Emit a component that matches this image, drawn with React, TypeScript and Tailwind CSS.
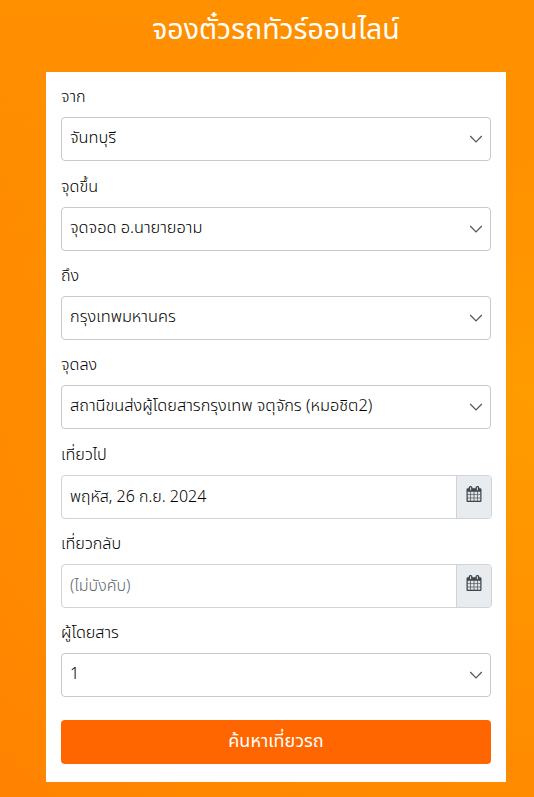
import { FC, ReactNode } from "react";
import clsx from "clsx";

type FieldProps = {
  label: string;
  value: string;
};

const Chevron: FC = () => (
  <svg
    viewBox="0 0 14 8"
    className="h-2 w-3.5 fill-none stroke-[#555]"
    strokeWidth="1.2"
  >
    <path d="M1.2 1L7 7l5.8-6" />
  </svg>
);

const CalendarIcon: FC = () => (
  <svg
    viewBox="0 0 1792 1792"
    className="size-4 fill-[#40474e] stroke-[#40474e]"
    strokeWidth="16"
  >
    <path d="M192 1664h288v-288h-288v288zm352 0h320v-288h-320v288zm-352-352h288v-320h-288v320zm352 0h320v-320h-320v320zm-352-384h288v-288h-288v288zm736 736h320v-288h-320v288zm-384-736h320v-288h-320v288zm768 736h288v-288h-288v288zm-384-352h320v-320h-320v320zm-352-864v-288q0-13-9.5-22.5t-22.5-9.5h-64q-13 0-22.5 9.5t-9.5 22.5v288q0 13 9.5 22.5t22.5 9.5h64q13 0 22.5-9.5t9.5-22.5zm736 864h288v-320h-288v320zm-384-384h320v-288h-320v288zm384 0h288v-288h-288v288zm32-480v-288q0-13-9.5-22.5t-22.5-9.5h-64q-13 0-22.5 9.5t-9.5 22.5v288q0 13 9.5 22.5t22.5 9.5h64q13 0 22.5-9.5t9.5-22.5zm384-64v1280q0 52-38 90t-90 38h-1408q-52 0-90-38t-38-90v-1280q0-52 38-90t90-38h128v-96q0-66 47-113t113-47h64q66 0 113 47t47 113v96h384v-96q0-66 47-113t113-47h64q66 0 113 47t47 113v96h128q52 0 90 38t38 90z" />
  </svg>
);

const Field: FC<{ label: string; children: ReactNode }> = ({
  label,
  children,
}) => (
  <div className="flex h-[89.35px] flex-col">
    <label className="h-8 text-[16.2px] leading-[24.6px] whitespace-nowrap">
      {label}
    </label>
    {children}
  </div>
);

const SelectField: FC<FieldProps> = ({ label, value }) => (
  <Field label={label}>
    <div className="flex h-11 items-center justify-between rounded border border-[#c8c9cb] pr-[7px] pl-2">
      <span className="-mt-0.5 text-[16.35px] leading-6">{value}</span>
      <Chevron />
    </div>
  </Field>
);

const DateField: FC<FieldProps & { muted?: boolean }> = ({
  label,
  value,
  muted,
}) => (
  <Field label={label}>
    <div className="-mr-px flex h-11 rounded border border-[#ced4da]">
      <div
        className={clsx(
          "flex grow items-center pl-2",
          muted && "text-[#5f6870]",
        )}
      >
        {value}
      </div>
      <div className="flex w-[35px] items-center justify-center rounded-r-[3px] border-l border-[#ced4da] bg-[#e9ecef] pb-1.5">
        <CalendarIcon />
      </div>
    </div>
  </Field>
);

const App: FC = () => (
  <div className="h-[797px] bg-[linear-gradient(to_bottom,#ff9000,#ff900000_50%),radial-gradient(farthest-corner_at_105%_48%,#ff9d00,#ff8f00_55%,#ff8200)] font-['Noto_Sans_Thai','Noto_Sans',sans-serif] font-light">
    <h1 className="h-[72px] pt-2.5 pl-[18px] text-center text-[28.5px] leading-[42px] font-normal text-white">
      จองตั๋วรถทัวร์ออนไลน์
    </h1>
    <div className="ml-[46px] h-[710px] w-[460px] bg-white px-[15px] pt-[13.2px] text-black">
      <SelectField label="จาก" value="จันทบุรี" />
      <SelectField label="จุดขึ้น" value="จุดจอด อ.นายายอาม" />
      <SelectField label="ถึง" value="กรุงเทพมหานคร" />
      <SelectField label="จุดลง" value="สถานีขนส่งผู้โดยสารกรุงเทพ จตุจักร (หมอชิต2)" />
      <DateField label="เที่ยวไป" value="พฤหัส, 26 ก.ย. 2024" />
      <DateField label="เที่ยวกลับ" value="(ไม่บังคับ)" muted />
      <SelectField label="ผู้โดยสาร" value="1" />
      <button className="mt-[9.35px] h-11 w-full rounded bg-[#ff6600] text-lg font-normal text-white">
        ค้นหาเที่ยวรถ
      </button>
    </div>
  </div>
);

export default App;
